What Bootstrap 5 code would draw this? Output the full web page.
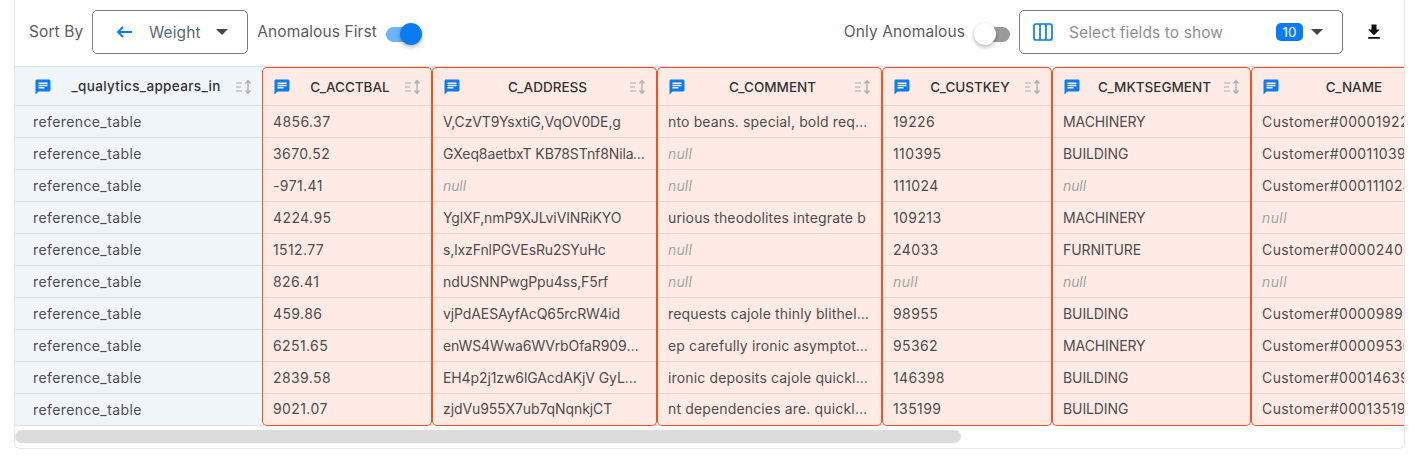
<!DOCTYPE html>
<html lang="en">
<head>
<meta charset="utf-8">
<title>Anomalous records</title>
<link href="https://cdn.jsdelivr.net/npm/bootstrap@5.3.0/dist/css/bootstrap.min.css" rel="stylesheet">
<style>
body { background:#fff; font-family:Inter,"Liberation Sans",sans-serif; color:#4a4a4a; }
.page-wrap { padding:0 10px 0 14px; }
.shell { height:449px; border:1px solid #e3e5e7; border-top:0; border-radius:0 0 6px 6px; overflow:hidden; background:#fff; }
.bar { height:66px; padding:10px 20px 12px 14px; gap:9px; font-size:15.5px; letter-spacing:.1px; color:#5c5c5c; }
.sel-box { height:44px; border:1px solid #7d7d7d; border-radius:5px; color:#5c6670; background:#fff; }
.sel-text { padding-top:2px; }
.sort-box { width:156px; padding:0 19px 0 22px; }
.field-box { width:324px; padding:0 19px 0 13px; color:#8f8f8f; }
.tg { position:relative; display:inline-block; width:36px; height:24px; flex:none; }
.tg-track { position:absolute; left:0; right:3px; top:7px; height:15px; border-radius:8px; background:#6db3f8; }
.tg-knob { position:absolute; top:3px; right:0; width:22px; height:22px; border-radius:50%; background:#0a7cf0; box-shadow:0 2px 4px rgba(0,0,0,.3); }
.tg-off .tg-track { background:#9a9a9a; left:3px; right:0; }
.tg-off .tg-knob { left:0; right:auto; background:#fff; }
.count-pill { background:#0a7cf0; color:#fff; font-size:13.5px; letter-spacing:0; width:27px; height:18px; line-height:18px; border-radius:5px; text-align:center; }
.dl-btn { width:20px; margin-left:12px; }
.tbl-clip { overflow:hidden; border-top:1px solid #dde1e5; }
.data-grid { table-layout:fixed; border-collapse:separate; border-spacing:0; width:1436px; margin:0; font-size:14px; }
.data-grid .c1 { width:247px; } .data-grid .c2 { width:170px; } .data-grid .c3 { width:225px; } .data-grid .c4 { width:225px; }
.data-grid .c5 { width:170px; } .data-grid .c6 { width:199px; } .data-grid .c7 { width:200px; }
.data-grid th, .data-grid td { height:32px; padding:0 10px 2px; white-space:nowrap; overflow:hidden; text-overflow:ellipsis; box-shadow:inset 0 -1px 0 #d9dde1; vertical-align:middle; font-weight:400; color:#4d4d4d; background:#f0f5f9; border:0; letter-spacing:.4px; }
.data-grid td.flat { letter-spacing:-.1px; }
.data-grid td.soft { letter-spacing:.15px; }
.data-grid td:first-child { padding-left:18px; }
.data-grid th { height:39px; font-size:13.5px; font-weight:500; color:#333; padding:0 9px 0 10px; letter-spacing:0; }
.data-grid th:first-child { padding-left:19px; letter-spacing:.35px; }
.data-grid .hit { background:#ffebe5; border-left:1px solid #f4511e; border-right:1px solid #f4511e; box-shadow:inset 0 -1px 0 #ecd3cb; }
.data-grid th.hit { border-top:1px solid #f4511e; border-top-left-radius:5px; border-top-right-radius:5px; }
.data-grid tr:last-child td.hit { border-bottom:1px solid #f4511e; border-bottom-left-radius:5px; border-bottom-right-radius:5px; box-shadow:none; }
.data-grid .wide-clip { text-overflow:clip; }
.nil { color:#a3a3a3; font-style:italic; }
.head-name { flex:1; text-align:center; overflow:hidden; white-space:nowrap; padding-left:5px; }
.track { height:22px; padding:4px 0; }
.thumb { height:13px; width:946px; background:#dcdcdc; border-radius:7px; }
</style>
</head>
<body>
<div class="page-wrap">
<div class="shell">
  <div class="bar d-flex align-items-center">
    <span>Sort By</span>
    <div class="sel-box sort-box d-flex align-items-center justify-content-between">
      <svg width="18" height="12" viewBox="0 0 18 12"><path d="M17 6H4M8 1 3 6l5 5" fill="none" stroke="#0a7cf0" stroke-width="2"/></svg>
      <span class="sel-text">Weight</span>
      <svg width="12" height="6" viewBox="0 0 12 6"><path d="M0 0h12L6 6z" fill="#444"/></svg>
    </div>
    <span>Anomalous First</span>
    <span class="tg"><span class="tg-track"></span><span class="tg-knob"></span></span>
    <span class="ms-auto">Only Anomalous</span>
    <span class="tg tg-off"><span class="tg-track"></span><span class="tg-knob"></span></span>
    <div class="sel-box field-box d-flex align-items-center">
      <svg width="20" height="18" viewBox="0 0 20 18" class="me-3"><rect x="1" y="1" width="18" height="16" rx="2" fill="none" stroke="#0a7cf0" stroke-width="1.7"/><path d="M7 1v16M13 1v16" stroke="#0a7cf0" stroke-width="1.7"/></svg>
      <span class="flex-grow-1 sel-text">Select fields to show</span>
      <span class="count-pill">10</span>
      <svg width="12" height="6" viewBox="0 0 12 6" class="ms-2"><path d="M0 0h12L6 6z" fill="#444"/></svg>
    </div>
    <span class="dl-btn d-flex">
      <svg width="20" height="20" viewBox="0 0 24 24"><path d="M5 20h14v-2H5v2zM19 9h-4V3H9v6H5l7 7 7-7z" fill="#111"/></svg>
    </span>
  </div>
  <div class="tbl-clip">
    <table class="data-grid">
      <colgroup><col class="c1"><col class="c2"><col class="c3"><col class="c4"><col class="c5"><col class="c6"><col class="c7"></colgroup>
      <thead><tr id="head"></tr></thead>
      <tbody id="body"></tbody>
    </table>
  </div>
  <div class="track"><div class="thumb"></div></div>
</div>
</div>
<script>
const cols=['_qualytics_appears_in','C_ACCTBAL','C_ADDRESS','C_COMMENT','C_CUSTKEY','C_MKTSEGMENT','C_NAME'];
const rows=[
['4856.37','V,CzVT9YsxtiG,VqOV0DE,g','nto beans. special, bold requests haggle','19226','MACHINERY','Customer#000019226'],
['3670.52','GXeq8aetbxT KB78STnf8NilaWq3bdYh',null,'110395','BUILDING','Customer#000110395'],
['-971.41',null,null,'111024',null,'Customer#000111024'],
['4224.95','YglXF,nmP9XJLviVINRiKYO','urious theodolites integrate b','109213','MACHINERY',null],
['1512.77','s,lxzFnlPGVEsRu2SYuHc',null,'24033','FURNITURE','Customer#000024033'],
['826.41','ndUSNNPwgPpu4ss,F5rf',null,null,null,null],
['459.86','vjPdAESAyfAcQ65rcRW4id','requests cajole thinly blithely ironic','98955','BUILDING','Customer#000098955'],
['6251.65','enWS4Wwa6WVrbOfaR909hKQ2x7Lm','ep carefully ironic asymptotes sleep','95362','MACHINERY','Customer#000095362'],
['2839.58','EH4p2j1zw6lGAcdAKjV GyLm7QdWk8Zr','ironic deposits cajole quickly final','146398','BUILDING','Customer#000146398'],
['9021.07','zjdVu955X7ub7qNqnkjCT','nt dependencies are. quickly even foxes','135199','BUILDING','Customer#000135199']];
const bubble='<svg width="18" height="18" viewBox="0 0 24 24" class="flex-shrink-0"><path fill="#0a7cf0" d="M20 2H4c-1.1 0-2 .9-2 2v18l4-4h14c1.1 0 2-.9 2-2V4c0-1.1-.9-2-2-2zM6 9h12v2H6V9zm8 5H6v-2h8v2zm4-6H6V6h12v2z"/></svg>';
const sorter='<svg width="18" height="16" viewBox="0 0 18 16" class="flex-shrink-0"><path d="M1 4h6M1 8h5M1 12h6" stroke="#c2c2c2" stroke-width="1.4"/><path d="M13 2v12M10.500 4.500 13 1.500l2.500 3M10.500 11.500 13 14.500l2.500-3" fill="none" stroke="#b0b0b0" stroke-width="1.400"/></svg>';
document.getElementById('head').innerHTML=cols.map((c,i)=>`<th class="${i?'hit':''}"><div class="d-flex align-items-center">${bubble}<span class="head-name">${c}</span>${sorter}</div></th>`).join('');
document.getElementById('body').innerHTML=rows.map(r=>'<tr><td>reference_table</td>'+r.map((v,i)=>`<td class="hit${i==5?' wide-clip':''}${i==1||i==4?' flat':''}${i==2?' soft':''}">${v===null?'<span class="nil">null</span>':v}</td>`).join('')+'</tr>').join('');
</script>
<script src="https://cdn.jsdelivr.net/npm/bootstrap@5.3.0/dist/js/bootstrap.bundle.min.js"></script>
</body>
</html>
